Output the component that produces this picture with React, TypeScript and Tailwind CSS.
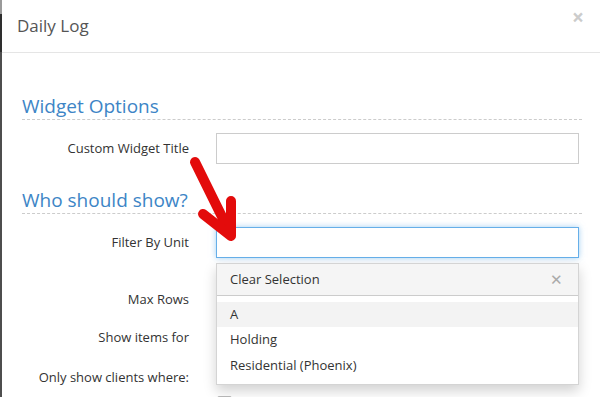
const labelCls = 'w-[168px] shrink-0 pr-[1px] text-right text-[13px] text-[#333]';

function Row({ label, className, children }: { label: string; className?: string; children?: React.ReactNode }) {
  return (
    <div className={`flex h-[31px] items-center gap-[26px] ${className ?? ''}`}>
      <div className={labelCls}>{label}</div>
      <div className="relative h-full w-[363px]">{children}</div>
    </div>
  );
}

function Arrow() {
  return (
    <svg className="pointer-events-none absolute left-0 top-0" width="600" height="397">
      <g stroke="#e30b0b" strokeWidth="10" strokeLinecap="round" strokeLinejoin="round" fill="none">
        <line x1="195" y1="162" x2="230" y2="233" />
        <polyline points="203,214 231,236 231,201" />
      </g>
    </svg>
  );
}

export default function App() {
  return (
    <div className="relative flex h-[397px] w-[600px] overflow-hidden bg-white font-['Open_Sans',sans-serif]">
      <div className="flex w-[2px] shrink-0 flex-col">
        <div className="h-[14px] bg-[#9a9a9a]" />
        <div className="h-[38px] bg-[#2e2e2e]" />
        <div className="flex-1 bg-[#4e4e4e]" />
      </div>

      <div className="flex-1">
        <div className="relative flex h-[53px] items-center border-b border-[#e5e5e5] pl-[15px]">
          <h4 className="text-[17px] font-normal text-[#555]">Daily Log</h4>
          <span className="absolute right-[16px] top-[7px] text-[21px] font-bold leading-none text-[#ccc]">×</span>
        </div>

        <div className="pl-[20px] pr-[18px] pt-[40px]">
          <h3 className="border-b border-dashed border-[#ccc] text-[19px] leading-[26px] text-[#3d85c6]">Widget Options</h3>
          <Row label="Custom Widget Title" className="mt-[13px]">
            <div className="h-full w-full border border-[#ccc] bg-white" />
          </Row>

          <h3 className="mt-[23px] border-b border-dashed border-[#ccc] text-[19px] leading-[26px] text-[#3d85c6]">Who should show?</h3>
          <Row label="Filter By Unit" className="mt-[13px]">
            <div className="h-full w-full border border-[#66afe9] bg-white shadow-[0_0_6px_rgba(102,175,233,0.6)]" />
            <div className="absolute left-0 right-0 top-[36px] z-10 border border-[#d4d4d4] bg-white pb-[5px] text-[13px] text-[#333] shadow-[0_6px_12px_rgba(0,0,0,0.18)]">
              <div className="flex h-[32px] items-center justify-between border-b border-[#ccc] bg-[#f5f5f5] pl-[13px] pr-[15px]">
                <span>Clear Selection</span>
                <span className="text-[15px] font-light leading-none text-[#aaa]">✕</span>
              </div>
              <div className="mt-[6px] flex h-[25px] items-center bg-[#f3f3f3] pl-[13px]">A</div>
              <div className="flex h-[26px] items-center pl-[13px]">Holding</div>
              <div className="flex h-[26px] items-center pl-[13px]">Residential (Phoenix)</div>
            </div>
          </Row>
          <Row label="Max Rows" className="mt-[26px]" />
          <Row label="Show items for" className="mt-[7px]" />
          <Row label="Only show clients where:" className="mt-[9px]" />
          <div className="ml-[195px] mt-[3px] h-[14px] w-[15px] rounded-[2px] border border-[#bbb]" />
        </div>
      </div>

      <Arrow />
    </div>
  );
}
